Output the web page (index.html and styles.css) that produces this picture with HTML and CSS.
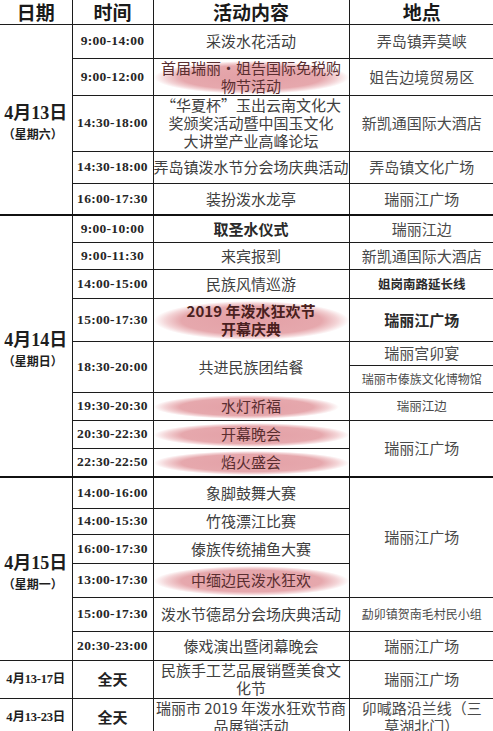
FILE: index.html
```html
<!DOCTYPE html>
<html lang="zh">
<head>
<meta charset="utf-8">
<title>泼水节活动安排</title>
<link rel="stylesheet" href="styles.css">
</head>
<body>
<table class="sched">
  <colgroup>
    <col class="c-date"><col class="c-time"><col class="c-act"><col class="c-loc">
  </colgroup>
  <thead>
    <tr class="r-h"><th>日期</th><th>时间</th><th>活动内容</th><th>地点</th></tr>
  </thead>
  <tbody>
    <tr class="r34">
      <td class="date" rowspan="5"><div class="d">4月13日</div><div class="w">（星期六）</div></td>
      <td class="time">9:00-14:00</td>
      <td class="act">采泼水花活动</td>
      <td class="loc">弄岛镇弄莫峡</td>
    </tr>
    <tr class="r36">
      <td class="time">9:00-12:00</td>
      <td class="act hl"><span class="t">首届瑞丽·姐告国际免税购<br>物节活动</span></td>
      <td class="loc">姐告边境贸易区</td>
    </tr>
    <tr class="r56">
      <td class="time">14:30-18:00</td>
      <td class="act">“华夏杯”玉出云南文化大<br>奖颁奖活动暨中国玉文化<br>大讲堂产业高峰论坛</td>
      <td class="loc">新凯通国际大酒店</td>
    </tr>
    <tr class="r32">
      <td class="time">14:30-18:00</td>
      <td class="act">弄岛镇泼水节分会场庆典活动</td>
      <td class="loc">弄岛镇文化广场</td>
    </tr>
    <tr class="r32">
      <td class="time">16:00-17:30</td>
      <td class="act">装扮泼水龙亭</td>
      <td class="loc">瑞丽江广场</td>
    </tr>

    <tr class="r27 grp">
      <td class="date" rowspan="9"><div class="d">4月14日</div><div class="w">（星期日）</div></td>
      <td class="time">9:00-10:00</td>
      <td class="act b">取圣水仪式</td>
      <td class="loc">瑞丽江边</td>
    </tr>
    <tr class="r27">
      <td class="time">9:00-11:30</td>
      <td class="act">来宾报到</td>
      <td class="loc">新凯通国际大酒店</td>
    </tr>
    <tr class="r29">
      <td class="time">14:00-15:00</td>
      <td class="act">民族风情巡游</td>
      <td class="loc sm b">姐岗南路延长线</td>
    </tr>
    <tr class="r43">
      <td class="time">15:00-17:30</td>
      <td class="act hl b"><span class="t">2019 年泼水狂欢节<br>开幕庆典</span></td>
      <td class="loc b">瑞丽江广场</td>
    </tr>
    <tr class="r24">
      <td class="time" rowspan="2">18:30-20:00</td>
      <td class="act" rowspan="2">共进民族团结餐</td>
      <td class="loc">瑞丽宫卯宴</td>
    </tr>
    <tr class="r27">
      <td class="loc xs">瑞丽市傣族文化博物馆</td>
    </tr>
    <tr class="r28">
      <td class="time">19:30-20:30</td>
      <td class="act hl narrow"><span class="t">水灯祈福</span></td>
      <td class="loc sm">瑞丽江边</td>
    </tr>
    <tr class="r28">
      <td class="time">20:30-22:30</td>
      <td class="act hl"><span class="t">开幕晚会</span></td>
      <td class="loc" rowspan="2">瑞丽江广场</td>
    </tr>
    <tr class="r29">
      <td class="time">22:30-22:50</td>
      <td class="act hl"><span class="t">焰火盛会</span></td>
    </tr>

    <tr class="r31 grp">
      <td class="date" rowspan="6"><div class="d">4月15日</div><div class="w">（星期一）</div></td>
      <td class="time">14:00-16:00</td>
      <td class="act">象脚鼓舞大赛</td>
      <td class="loc" rowspan="4">瑞丽江广场</td>
    </tr>
    <tr class="r26">
      <td class="time">14:00-15:30</td>
      <td class="act">竹筏漂江比赛</td>
    </tr>
    <tr class="r29">
      <td class="time">16:00-17:30</td>
      <td class="act">傣族传统捕鱼大赛</td>
    </tr>
    <tr class="r34">
      <td class="time">13:00-17:30</td>
      <td class="act hl"><span class="t">中缅边民泼水狂欢</span></td>
    </tr>
    <tr class="r34">
      <td class="time">15:00-17:30</td>
      <td class="act">泼水节德昂分会场庆典活动</td>
      <td class="loc xs">勐卯镇贺南毛村民小组</td>
    </tr>
    <tr class="r29">
      <td class="time">20:30-23:00</td>
      <td class="act">傣戏演出暨闭幕晚会</td>
      <td class="loc">瑞丽江广场</td>
    </tr>

    <tr class="r38">
      <td class="date small">4月13-17日</td>
      <td class="allday">全天</td>
      <td class="act">民族手工艺品展销暨美食文<br>化节</td>
      <td class="loc">瑞丽江广场</td>
    </tr>
    <tr class="r38">
      <td class="date small">4月13-23日</td>
      <td class="allday">全天</td>
      <td class="act">瑞丽市 2019 年泼水狂欢节商<br>品展销活动</td>
      <td class="loc">卯喊路沿兰线（三<br>莫湖北门）</td>
    </tr>
  </tbody>
</table>
</body>
</html>
```

FILE: styles.css
```css
html, body {
  margin: 0;
  padding: 0;
  background: #ffffff;
}

body {
  width: 493px;
  height: 731px;
  overflow: hidden;
}

.sched {
  border-collapse: collapse;
  table-layout: fixed;
  width: 494px;
  font-family: "Noto Sans CJK SC", "Noto Sans", sans-serif;
  color: #3e3e3e;
  font-size: 15px;
  line-height: 18px;
}

.c-date { width: 72px; }
.c-time { width: 81px; }
.c-act  { width: 196px; }
.c-loc  { width: 145px; }

.sched th,
.sched td {
  border: 1px solid #1c1c1c;
  padding: 0;
  text-align: center;
  vertical-align: middle;
  white-space: nowrap;
  overflow: visible;
}

.sched tr > :first-child { border-left: none; }
.sched th:last-child,
.sched td.loc { border-right: none; }
.sched thead th { border-top: none; }

.sched th {
  font-size: 19px;
  font-weight: 700;
  color: #1a1a1a;
  line-height: 22px;
}

.r-h { height: 24px; }
.r24 { height: 24px; }
.r26 { height: 26px; }
.r27 { height: 27px; }
.r28 { height: 28px; }
.r29 { height: 29px; }
.r31 { height: 31px; }
.r32 { height: 32px; }
.r34 { height: 34px; }
.r36 { height: 36px; }
.r38 { height: 38px; }
.r43 { height: 43px; }
.r56 { height: 56px; }

.grp > td { border-top: 2px solid #111; }

.date {
  color: #1e1e1e;
  font-weight: 700;
}
.date .d {
  font-family: "Liberation Serif", "Noto Sans CJK SC", serif;
  font-size: 18px;
  line-height: 24px;
  padding-top: 6px;
}
.date .w {
  font-size: 12px;
  line-height: 18px;
  margin-left: -6px;
}
.date.small {
  font-family: "Liberation Serif", "Noto Sans CJK SC", serif;
  font-size: 12.5px;
  letter-spacing: -0.2px;
}

.time {
  font-family: "Liberation Serif", serif;
  font-weight: 700;
  font-size: 13.5px;
  letter-spacing: 0.3px;
  color: #262626;
}

.allday {
  font-weight: 700;
  font-size: 15px;
  color: #222;
}

.act { color: #404040; }
.loc { color: #4a4a4a; }

.b { font-weight: 700; color: #2a2a2a; }
.sm { font-size: 12.5px; }
.xs { font-size: 12px; }

.hl { position: relative; }
.hl::before {
  content: "";
  position: absolute;
  left: 0;
  right: 0;
  top: 2px;
  bottom: 1px;
  border-radius: 50%;
  background: radial-gradient(closest-side, #e3a0a6 0%, #e6a8ad 72%, rgba(236, 184, 188, 0.6) 88%, rgba(255, 255, 255, 0) 100%);
}
.hl.narrow::before { right: 10px; }
.hl .t {
  position: relative;
  color: #5a2e30;
}
.hl.b .t { color: #4a1f20; }
```
